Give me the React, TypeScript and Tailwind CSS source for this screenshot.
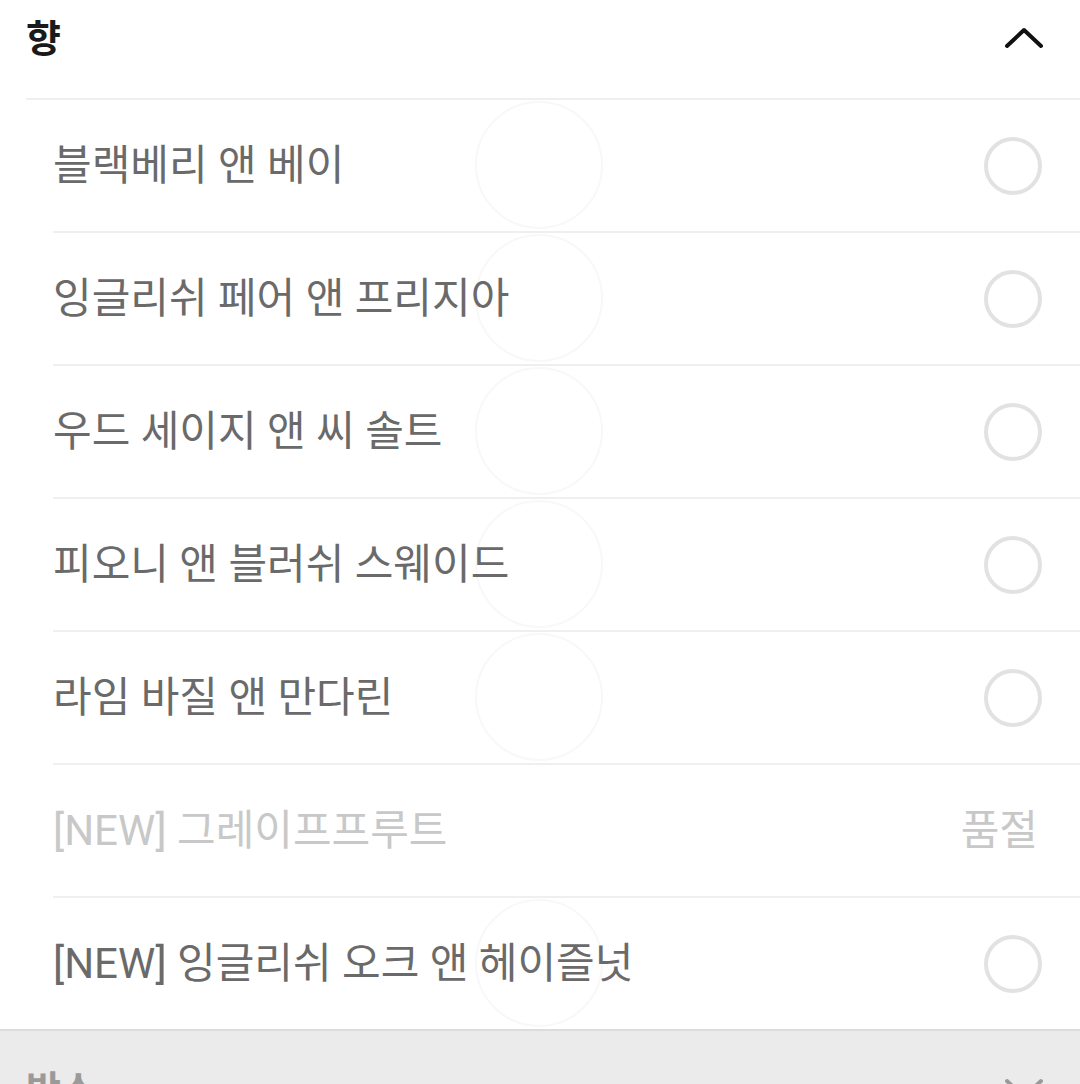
import React from "react";

const items: { name: string; soldOut?: boolean }[] = [
  { name: "블랙베리 앤 베이" },
  { name: "잉글리쉬 페어 앤 프리지아" },
  { name: "우드 세이지 앤 씨 솔트" },
  { name: "피오니 앤 블러쉬 스웨이드" },
  { name: "라임 바질 앤 만다린" },
  { name: "[NEW] 그레이프프루트", soldOut: true },
  { name: "[NEW] 잉글리쉬 오크 앤 헤이즐넛" },
];

const font = { fontFamily: '"Roboto", "Noto Sans CJK KR", sans-serif' };

export default function App() {
  return (
    <div className="w-[1080px] h-[1084px] overflow-hidden bg-white" style={font}>
      <div className="h-[98px] flex items-center justify-between pl-[26px] pr-[36px]">
        <span className="text-[38px] font-bold text-[#1a1a1a] leading-none -mt-[20px]">향</span>
        <svg width="40" height="24" viewBox="0 0 40 24" className="-mt-[22px]">
          <path d="M3 20 L20 4 L37 20" fill="none" stroke="#111" strokeWidth="4" strokeLinecap="round" strokeLinejoin="round" />
        </svg>
      </div>
      <div className="ml-[26px] h-[2px] bg-[#efefef]" />
      {items.map((it, i) => (
        <div key={i}>
          <div className="relative h-[131px] flex items-center justify-between pl-[53px] pr-[38px]">
            {!it.soldOut && (
              <div className="absolute left-[475px] top-[1px] w-[128px] h-[128px] rounded-full border-2 border-[#f8f8f8]" />
            )}
            <span className={`relative text-[42px] leading-none ${it.soldOut ? "text-[#c8c8c8]" : "text-[#6a6a6a]"}`}>{it.name}</span>
            {it.soldOut ? (
              <span className="text-[42px] leading-none text-[#c8c8c8] mr-[4px]">품절</span>
            ) : (
              <div className="w-[58px] h-[58px] rounded-full border-[4px] border-[#e2e2e2]" />
            )}
          </div>
          {i < items.length - 1 && <div className="ml-[53px] h-[2px] bg-[#efefef]" />}
        </div>
      ))}
      <div className="border-t-2 border-[#dcdcdc] bg-[#ebebeb] h-[100px] flex items-start justify-between pl-[26px] pr-[36px] pt-[40px]">
        <span className="text-[38px] font-bold text-[#9a9a9a] leading-none">박스</span>
        <svg width="40" height="24" viewBox="0 0 40 24" className="mt-[6px]">
          <path d="M3 4 L20 20 L37 4" fill="none" stroke="#9a9a9a" strokeWidth="4" strokeLinecap="round" strokeLinejoin="round" />
        </svg>
      </div>
    </div>
  );
}
